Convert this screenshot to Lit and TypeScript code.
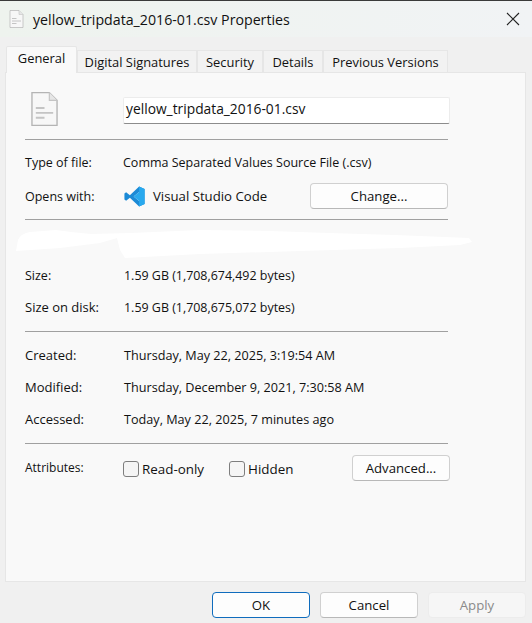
import { LitElement, html, css } from 'lit';
import { customElement } from 'lit/decorators.js';

const TABS = ['Digital Signatures', 'Security', 'Details', 'Previous Versions'];

const fileIcon = (width: number, height: number) => html`<svg width=${width} height=${height} viewBox="0 0 28 36">
  <path d="M1 1H19L27 9V35H1Z" fill="#f7f7f7" stroke="#b4b4b4" stroke-width="1.4" />
  <path d="M19 1V9H27" fill="#e6e6e6" stroke="#c4c4c4" stroke-width="1.2" />
  <path d="M5 17H14M5 22H23M5 27H14" stroke="#c4c4c4" stroke-width="2" fill="none" />
</svg>`;

const vscodeIcon = html`<svg width="23" height="21" viewBox="0 0 100 100">
  <path d="M72 2 98 14V86L72 98 28 56 10 70 2 64V36L10 30 28 44Z M72 28 46 50 72 72Z" fill="#1c8ad6" fill-rule="evenodd" />
  <path d="M72 2 98 14V86L72 98Z M72 28 46 50 72 72Z" fill="#29a9ee" fill-rule="evenodd" />
</svg>`;

@customElement('app-root')
export class AppRoot extends LitElement {
  static styles = css`
    :host {
      display: block;
      width: 532px;
      height: 623px;
      overflow: hidden;
      font-family: 'Open Sans', 'Noto Sans', sans-serif;
      font-size: 12.5px;
      color: #111;
    }
    .window {
      height: 623px;
      box-sizing: border-box;
      display: flex;
      flex-direction: column;
      background: #f0f0f0;
      border-top: 1px solid #3a3a3a;
    }
    .titlebar {
      height: 36px;
      flex: none;
      display: flex;
      align-items: center;
      padding: 0 12px 0 9px;
      gap: 9px;
      background: linear-gradient(90deg, #eef3ee, #f1f3f5);
    }
    .title {
      flex: 1;
      font-size: 14.2px;
    }
    .close {
      width: 14px;
      height: 14px;
    }
    .tabs {
      height: 35px;
      flex: none;
      display: flex;
      align-items: flex-end;
      padding-left: 6px;
      font-size: 12.9px;
    }
    .tab {
      height: 22px;
      box-sizing: border-box;
      display: flex;
      align-items: center;
      justify-content: center;
      padding-top: 1px;
      border: 1px solid #e6e6e6;
      border-bottom: none;
      background: #f2f2f2;
    }
    .tab.active {
      width: 71px;
      height: 27px;
      padding: 0 0 5px;
      background: #f9f9f9;
      position: relative;
      z-index: 1;
      margin-bottom: -1px;
      border-radius: 2px 2px 0 0;
    }
    .tab:nth-child(2) { width: 120px; }
    .tab:nth-child(3) { width: 66px; }
    .tab:nth-child(4) { width: 60px; }
    .tab:nth-child(5) { width: 125px; }
    .panel {
      width: 521px;
      height: 510px;
      margin-left: 5px;
      flex: none;
      box-sizing: border-box;
      border: 1px solid #e6e6e6;
      background: #f9f9f9;
      padding: 0 0 0 19px;
    }
    .name-row {
      height: 66px;
      display: flex;
      align-items: center;
      padding: 6px 0 0 6px;
      box-sizing: border-box;
      width: 425px;
    }
    .name-input {
      margin: 2px 0 0 65px;
      width: 327px;
      height: 27px;
      flex: none;
      box-sizing: border-box;
      padding: 0 2px 3px;
      display: flex;
      align-items: center;
      background: #fff;
      border: 1px solid #ececec;
      border-bottom: 1px solid #8c8c8c;
      border-radius: 2px;
      font-size: 13.8px;
    }
    hr {
      width: 423px;
      margin: 0;
      border: none;
      border-top: 1px solid #a0a0a0;
    }
    .row {
      display: flex;
      align-items: center;
      width: 423px;
      height: 32px;
    }
    .key {
      width: 98px;
      flex: none;
    }
    .long-key {
      font-size: 13px;
    }
    .tight-key {
      font-size: 12px;
    }
    .val {
      flex: 1;
      display: flex;
      align-items: center;
      min-width: 0;
      white-space: nowrap;
    }
    .val.date {
      padding-left: 1px;
      font-size: 12.65px;
    }
    .val.size {
      padding-left: 1px;
      font-size: 12.45px;
    }
    .opens {
      margin-top: 2px;
    }
    .app-name {
      margin-left: 7px;
      font-size: 13.2px;
    }
    .btn {
      height: 26px;
      box-sizing: border-box;
      display: flex;
      align-items: center;
      justify-content: center;
      background: #fdfdfd;
      border: 1px solid #d0d0d0;
      border-bottom-color: #b8b8b8;
      border-radius: 4px;
      flex: none;
      font-size: 13.2px;
    }
    .change {
      width: 138px;
      margin-left: auto;
    }
    .smudge {
      display: block;
      height: 31px;
      width: 460px;
      margin-left: -9px;
    }
    .block-size {
      padding: 0 0 8px;
    }
    .block-dates {
      padding: 7px 0 8px;
    }
    .type-block {
      padding: 6px 0 7px;
    }
    .smudge-wrap {
      padding-top: 8px;
    }
    .attrs {
      padding-top: 8px;
    }
    .attrs .row {
      width: 425px;
    }
    .attrs .key {
      margin-top: -2px;
    }
    .check {
      width: 16px;
      height: 16px;
      box-sizing: border-box;
      border: 1px solid #7e7e7e;
      border-radius: 3px;
      background: #f5f5f5;
      flex: none;
      margin: 1px 3px 0 0;
    }
    .check-label {
      font-size: 13.4px;
      margin-top: 1px;
    }
    .hidden-box {
      margin-left: 25px;
    }
    .advanced {
      width: 98px;
      margin-left: auto;
    }
    .footer {
      flex: 1;
      display: flex;
      justify-content: flex-end;
      gap: 10px;
      padding: 10px 6px 0 0;
    }
    .footer .btn {
      width: 98px;
    }
    .footer .ok {
      border: 1px solid #0f6cbd;
      background: #fdfdfd;
    }
    .footer .apply {
      color: #8a8a8a;
      background: #f6f6f6;
      border-color: #ececec;
    }
  `;

  render() {
    return html`
      <div class="window">
        <div class="titlebar">
          ${fileIcon(15, 18)}
          <span class="title">yellow_tripdata_2016-01.csv Properties</span>
          <svg class="close" viewBox="0 0 14 14">
            <path d="M1 1 13 13M13 1 1 13" stroke="#222" stroke-width="1.1" fill="none" />
          </svg>
        </div>
        <div class="tabs">
          <div class="tab active">General</div>
          ${TABS.map((tab) => html`<div class="tab">${tab}</div>`)}
        </div>
        <div class="panel">
          <div class="name-row">
            ${fileIcon(28, 36)}
            <div class="name-input">yellow_tripdata_2016-01.csv</div>
          </div>
          <hr />
          <div class="type-block">
            <div class="row">
              <span class="key">Type of file:</span>
              <span class="val">Comma Separated Values Source File (.csv)</span>
            </div>
            <div class="row opens">
              <span class="key">Opens with:</span>
              <span class="val">
                ${vscodeIcon}
                <span class="app-name">Visual Studio Code</span>
                <span class="btn change">Change...</span>
              </span>
            </div>
          </div>
          <hr />
          <div class="smudge-wrap">
            <svg class="smudge" viewBox="0 0 460 31">
              <path
                d="M2 12 Q4 6 14 4 L40 2 L55 4 L75 6 L115 5 L184 2 L254 3 L313 5 L379 7 L453 10 L456 14 L444 17 L384 20 L284 23 L184 26 L109 30 L104 22 L101 10 L84 15 L44 20 L0 23 Z"
                fill="#fff"
              />
            </svg>
          </div>
          <div class="block-size">
            <div class="row">
              <span class="key">Size:</span>
              <span class="val size">1.59 GB (1,708,674,492 bytes)</span>
            </div>
            <div class="row">
              <span class="key long-key">Size on disk:</span>
              <span class="val size">1.59 GB (1,708,675,072 bytes)</span>
            </div>
          </div>
          <hr />
          <div class="block-dates">
            <div class="row">
              <span class="key long-key">Created:</span>
              <span class="val date">Thursday, May 22, 2025, 3:19:54 AM</span>
            </div>
            <div class="row">
              <span class="key long-key">Modified:</span>
              <span class="val date">Thursday, December 9, 2021, 7:30:58 AM</span>
            </div>
            <div class="row">
              <span class="key long-key">Accessed:</span>
              <span class="val date">Today, May 22, 2025, 7 minutes ago</span>
            </div>
          </div>
          <hr />
          <div class="attrs">
            <div class="row">
              <span class="key tight-key">Attributes:</span>
              <span class="val">
                <span class="check"></span><span class="check-label">Read-only</span>
                <span class="check hidden-box"></span><span class="check-label">Hidden</span>
                <span class="btn advanced">Advanced...</span>
              </span>
            </div>
          </div>
        </div>
        <div class="footer">
          <span class="btn ok">OK</span>
          <span class="btn">Cancel</span>
          <span class="btn apply">Apply</span>
        </div>
      </div>
    `;
  }
}
